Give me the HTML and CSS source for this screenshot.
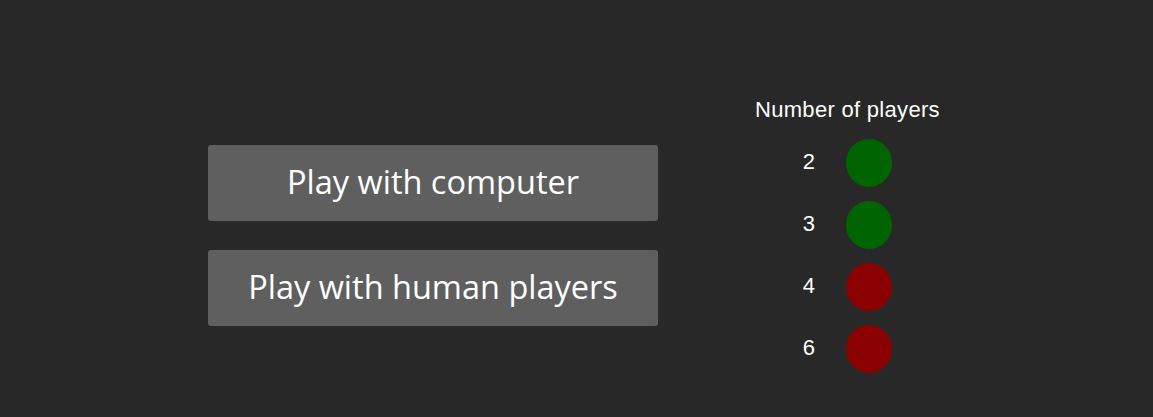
FILE: index.html
```html
<!DOCTYPE html>
<html lang="en">
<head>
<meta charset="utf-8">
<title>Game setup</title>
<link rel="stylesheet" href="styles.css">
</head>
<body>
<main class="page">
  <div class="modes">
    <button class="mode-btn">Play with computer</button>
    <button class="mode-btn">Play with human players</button>
  </div>
  <section class="players">
    <h2 class="players-title">Number of players</h2>
    <div class="player-row"><span class="player-num">2</span><span class="dot dot-on"></span></div>
    <div class="player-row"><span class="player-num">3</span><span class="dot dot-on"></span></div>
    <div class="player-row"><span class="player-num">4</span><span class="dot dot-off"></span></div>
    <div class="player-row"><span class="player-num">6</span><span class="dot dot-off"></span></div>
  </section>
</main>
</body>
</html>
```

FILE: styles.css
```css
html, body {
  margin: 0;
  padding: 0;
  background: #282828;
  height: 100%;
}
.page {
  display: flex;
  align-items: center;
  gap: 97px;
  padding: 98px 0 0 208px;
}
.modes {
  display: flex;
  flex-direction: column;
  gap: 29px;
}
.mode-btn {
  width: 450px;
  height: 76px;
  background: #5f5f5f;
  border: none;
  border-radius: 3px;
  color: #ffffff;
  font-family: "Open Sans", "Noto Sans", sans-serif;
  font-size: 32.5px;
  padding: 0 0 3px;
  cursor: pointer;
}
.players {
  display: flex;
  flex-direction: column;
  align-items: center;
  gap: 14px;
  font-family: "Liberation Sans", Arial, sans-serif;
  color: #ffffff;
}
.players-title {
  margin: 0 0 3px;
  font-size: 22px;
  letter-spacing: 0.3px;
  font-weight: normal;
  line-height: 24px;
}
.player-row {
  display: flex;
  align-items: center;
  gap: 31px;
  font-size: 22px;
}
.player-num {
  line-height: 24px;
  padding-bottom: 2px;
}
.dot {
  width: 46px;
  height: 48px;
  border-radius: 50%;
}
.dot-on { background: #006400; }
.dot-off { background: #8b0000; }
```
